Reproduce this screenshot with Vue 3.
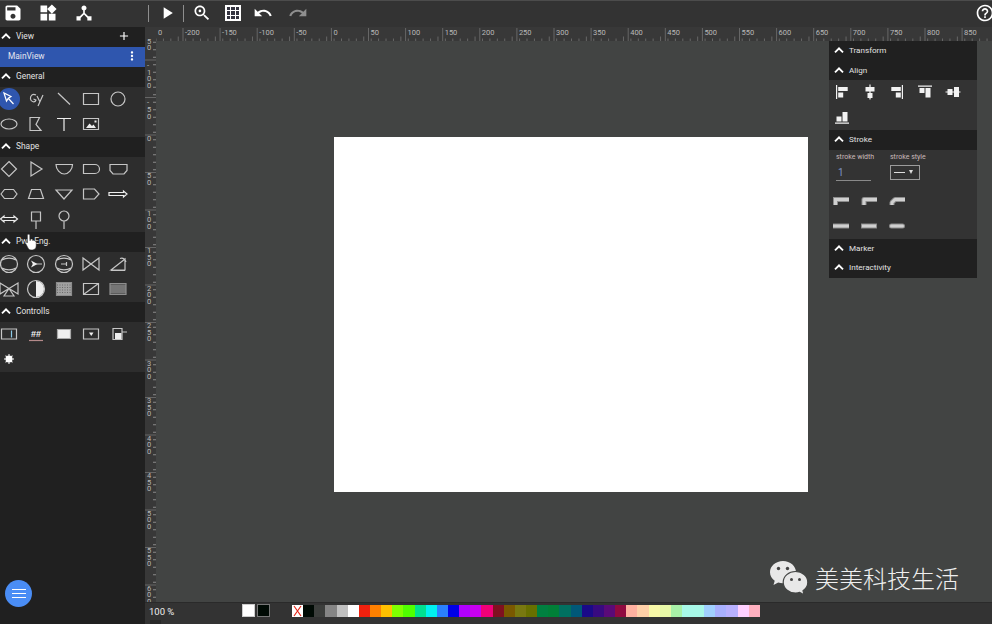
<template>
  <div class="app">
    <header class="toolbar">
      <svg v-for="b in toolButtons" :key="b.name" class="tool" :style="{ left: b.x + 'px', opacity: b.dim ? 0.45 : 1 }" viewBox="0 0 24 24">
        <path :d="b.d" fill="#fff" />
        <circle v-if="b.name === 'zoom'" cx="9.5" cy="9.5" r="1.6" fill="#fff" />
      </svg>
      <span class="sep" style="left: 148px"></span>
      <span class="sep" style="left: 183px"></span>
      <div class="grid-btn">
        <i v-for="n in 9" :key="n"></i>
      </div>
    </header>

    <div class="body">
      <aside class="sidebar">
        <div class="head">
          <svg class="chev" viewBox="0 0 24 24"><path :d="chevron" /></svg>
          <span>View</span>
          <svg class="plus" viewBox="0 0 24 24"><path d="M19 13h-6v6h-2v-6H5v-2h6V5h2v6h6v2z" fill="#fff" /></svg>
        </div>
        <div class="view-row">
          <span>MainView</span>
          <svg class="more" viewBox="0 0 24 24"><path d="M12 8c1.1 0 2-.9 2-2s-.9-2-2-2-2 .9-2 2 .9 2 2 2zm0 2c-1.1 0-2 .9-2 2s.9 2 2 2 2-.9 2-2-.9-2-2-2zm0 6c-1.1 0-2 .9-2 2s.9 2 2 2 2-.9 2-2-.9-2-2-2z" fill="#fff" /></svg>
        </div>

        <section v-for="s in palettes" :key="s.title">
          <div class="head">
            <svg class="chev" viewBox="0 0 24 24"><path :d="chevron" /></svg>
            <span>{{ s.title }}</span>
          </div>
          <div class="icons">
            <div v-for="(ic, i) in s.icons" :key="i" class="icon" :class="{ active: ic.active }">
              <svg viewBox="0 0 20 20" width="20" height="20">
                <path v-if="ic.f" :d="ic.f" :fill="ic.fc || '#eee'" />
                <path v-if="ic.d" :d="ic.d" fill="none" :stroke="ic.c || '#c6c6c6'" stroke-width="1.2" />
                <path v-if="ic.d2" :d="ic.d2" fill="none" :stroke="ic.c2" stroke-width="1.2" :stroke-dasharray="ic.dash" />
                <text v-if="ic.t" x="10" y="12.5" text-anchor="middle" class="hash">{{ ic.t }}</text>
              </svg>
            </div>
          </div>
        </section>

        <div class="fab">
          <i></i><i></i><i></i>
        </div>
        <svg class="hand" viewBox="0 0 12 18">
          <path d="M3.6 1.2c.7 0 1.2.5 1.2 1.2v5l.9-.2V6.400c0-.6 1.700-.6 1.900 0v1l.8-.1c.5-.2 1.300.1 1.400.6l.2.4c.5-.1 1.200.2 1.200.9v3.500c0 2.300-1.400 4.200-3.800 4.200H6c-1.600 0-2.300-.9-3-2L.7 10.600c-.5-.9.6-1.900 1.500-1.100l.2.3V2.400c0-.7.5-1.200 1.200-1.200z" fill="#fff" stroke="#222" stroke-width=".5" />
        </svg>
      </aside>

      <main class="main">
        <div class="ruler-top">
          <div class="corner"></div>
          <svg width="836" height="14">
            <text x="2" y="7.500" class="rt">0</text>
            <line v-for="(x, i) in minorX" :key="'m' + i" :x1="x" :x2="x" :y1="i % 5 === 3 ? 9.500 : 11.500" y2="14" class="tick" />
            <g v-for="(v, i) in labelsX" :key="v">
              <line :x1="27 + i * 37.1" :x2="27 + i * 37.1" y1="1" y2="14" class="tick" />
              <text :x="29 + i * 37.1" y="7.500" class="rt">{{ v }}</text>
            </g>
          </svg>
        </div>

        <div class="work">
          <svg class="ruler-left" width="11" height="561">
            <line v-for="y in minorY" :key="'n' + y" x1="8" x2="11" :y1="y" :y2="y" class="tick light" />
            <line v-for="y in majorY" :key="'j' + y" x1="0" x2="11" :y1="y" :y2="y" class="tick" />
            <text v-for="g in glyphsY" :key="g.id" x="2" :y="g.y" class="rt">{{ g.c }}</text>
          </svg>

          <div class="canvas">
            <div class="artboard"></div>

            <div class="panel">
              <div class="head"><svg class="chev" viewBox="0 0 24 24"><path :d="chevron" /></svg><span>Transform</span></div>
              <div class="head"><svg class="chev" viewBox="0 0 24 24"><path :d="chevron" /></svg><span>Align</span></div>
              <div class="icons align">
                <div v-for="(d, i) in alignIcons" :key="i" class="icon">
                  <svg viewBox="0 0 20 20" width="20" height="20"><path :d="d" fill="#f2f2f2" /></svg>
                </div>
              </div>
              <div class="head"><svg class="chev" viewBox="0 0 24 24"><path :d="chevron" /></svg><span>Stroke</span></div>
              <div class="stroke">
                <div class="fields">
                  <div class="field width">
                    <label>stroke width</label>
                    <div class="value">1</div>
                  </div>
                  <div class="field">
                    <label>stroke style</label>
                    <div class="select"><span class="dash"></span><span class="arrow"></span></div>
                  </div>
                </div>
                <div class="caps">
                  <svg v-for="(c, i) in caps" :key="i" viewBox="0 0 18 12" width="18" height="12">
                    <path :d="c.d" fill="none" stroke="#8d8d8d" stroke-width="5" :stroke-linecap="c.cap" :stroke-linejoin="c.join" />
                    <path :d="c.d" fill="none" stroke="#d0d0d0" stroke-width="3" :stroke-linecap="c.cap" :stroke-linejoin="c.join" />
                  </svg>
                </div>
              </div>
              <div class="head"><svg class="chev" viewBox="0 0 24 24"><path :d="chevron" /></svg><span>Marker</span></div>
              <div class="head"><svg class="chev" viewBox="0 0 24 24"><path :d="chevron" /></svg><span>Interactivity</span></div>
            </div>

            <div class="watermark">
              <svg width="42" height="38" viewBox="0 0 42 38">
                <path d="M15 2C7.800 2 2 7 2 13.200c0 3.500 1.800 6.500 4.700 8.600L5.500 26l4.700-2.500c1.500.5 3 .7 4.800.7 7.200 0 13-5 13-11S22.200 2 15 2z" fill="#e8e8e8" />
                <circle cx="10.500" cy="9.500" r="1.700" fill="#444" />
                <circle cx="19.500" cy="9.500" r="1.700" fill="#444" />
                <path d="M27.500 12.500c-6.800 0-12.300 4.800-12.300 10.800s5.500 10.800 12.300 10.800c1.500 0 2.900-.2 4.200-.7l4.300 2.300-1-3.900c2.900-2 4.800-5 4.800-8.500 0-6-5.500-10.800-12.300-10.800z" fill="#e8e8e8" stroke="#424443" stroke-width="1.200" />
                <circle cx="23.500" cy="20.500" r="1.500" fill="#444" />
                <circle cx="31.500" cy="20.500" r="1.500" fill="#444" />
              </svg>
              <span>美美科技生活</span>
            </div>
          </div>
        </div>

        <footer class="status">
          <span class="zoom">100 %</span>
          <span class="swatch fill"></span>
          <span class="swatch line"></span>
          <div class="colors">
            <span class="none">
              <svg viewBox="0 0 11 12" width="11" height="12"><path d="M2 1l7 10M9 1L2 11" stroke="#e8281a" stroke-width="1.200" /></svg>
            </span>
            <span v-for="c in colors" :key="c.id" :style="{ background: c.hex }"></span>
          </div>
          <span class="chip"></span>
        </footer>
      </main>
    </div>
  </div>
</template>

<script setup>
const chevron = 'M12 7l-8 8 2.200 2.200L12 11.400l5.800 5.800L20 15z'

const toolButtons = [
  { name: 'save', x: 3, d: 'M17 3H5c-1.110 0-2 .9-2 2v14c0 1.100.89 2 2 2h14c1.100 0 2-.9 2-2V7l-4-4zm-5 16c-1.660 0-3-1.340-3-3s1.340-3 3-3 3 1.340 3 3-1.340 3-3 3zm3-10H5V5h10v4z' },
  { name: 'widgets', x: 38, d: 'M13 13v8h8v-8h-8zM3 21h8v-8H3v8zM3 3v8h8V3H3zm13.660-1.310L11 7.340 16.660 13l5.660-5.660-5.660-5.650z' },
  { name: 'hub', x: 74, d: 'M17 16l-4-4V8.820C14.160 8.400 15 7.300 15 6c0-1.660-1.340-3-3-3S9 4.340 9 6c0 1.300.84 2.400 2 2.820V12l-4 4H3v5h5v-3.050l4-4.200 4 4.200V21h5v-5h-4z' },
  { name: 'play', x: 157, d: 'M8 5v14l11-7z' },
  { name: 'zoom', x: 192, d: 'M15.500 14h-.79l-.28-.27C15.410 12.590 16 11.110 16 9.500 16 5.910 13.090 3 9.500 3S3 5.910 3 9.500 5.910 16 9.500 16c1.610 0 3.090-.59 4.230-1.570l.27.28v.79l5 4.990L20.490 19l-4.990-5zm-6 0C7.010 14 5 11.990 5 9.500S7.010 5 9.500 5 14 7.010 14 9.500 11.990 14 9.500 14z' },
  { name: 'undo', x: 253, d: 'M12.500 8c-2.650 0-5.050.99-6.900 2.600L2 7v9h9l-3.620-3.620c1.390-1.160 3.160-1.880 5.120-1.880 3.540 0 6.550 2.310 7.600 5.500l2.370-.78C21.080 11.030 17.150 8 12.500 8z' },
  { name: 'redo', x: 288, dim: true, d: 'M18.400 10.600C16.550 8.990 14.150 8 11.500 8c-4.650 0-8.580 3.030-9.960 7.220L3.900 16c1.050-3.190 4.050-5.500 7.600-5.500 1.950 0 3.730.72 5.120 1.880L13 16h9V7l-3.600 3.600z' },
  { name: 'help', x: 975, d: 'M11 18h2v-2h-2v2zm1-16C6.480 2 2 6.480 2 12s4.480 10 10 10 10-4.480 10-10S17.520 2 12 2zm0 18c-4.410 0-8-3.590-8-8s3.590-8 8-8 8 3.590 8 8-3.590 8-8 8zm0-14c-2.210 0-4 1.790-4 4h2c0-1.100.9-2 2-2s2 .9 2 2c0 2-3 1.750-3 5h2c0-2.250 3-2.500 3-5 0-2.210-1.790-4-4-4z' }
]

const circ = 'M18.500 10a8.500 8.500 0 1 1-17 0 8.500 8.500 0 1 1 17 0z'
const arcs = 'M3 6C7 3.500 13 3.500 17 6M3 14C7 16.500 13 16.500 17 14'

const palettes = [
  {
    title: 'General',
    icons: [
      { active: true, d: 'M5 4l2.500 8 1.800-2.700L12 7.500zM9 9l5.500 6', c: '#fff' },
      { d: 'M10 6C6.500 4 4 7 4.500 10c.5 3 4.500 4 5.500 1L7.500 10M11 7l3 6M17 6l-5 11' },
      { d: 'M4 4l12 11.500' },
      { d: 'M2.500 4.500h15v11h-15z' },
      { d: 'M17 10a7 7 0 1 1-14 0 7 7 0 1 1 14 0z' },
      { d: 'M18 10a8 5 0 1 1-16 0 8 5 0 1 1 16 0z' },
      { d: 'M4 16.500V3.500h9.500L10 10.500l5 6z' },
      { d: 'M3 4.500h14M10 4.500V17', c: '#eee' },
      { d: 'M2.500 4.500h15v11h-15z', f: 'M5 14l3.500-4.500 2.500 2.500 1.500-1.500 2.500 3.500zM13.500 6.500h2v2h-2z' }
    ]
  },
  {
    title: 'Shape',
    icons: [
      { d: 'M10 2.500l7.500 7.500-7.500 7.500L2.500 10z' },
      { d: 'M5 3l11 7-11 7z' },
      { d: 'M2 5.500h16.500c0 5-4 9.500-8.200 9.500S2 10.500 2 5.500z' },
      { d: 'M2.500 5.500h11.500a4.500 4.500 0 0 1 0 9H2.500z' },
      { d: 'M2 5.500h17v6l-3 3.500H5l-3-3.500z' },
      { d: 'M2 10l3.500-4.500h9L18 10l-3.500 4.500h-9z' },
      { d: 'M5.500 5.500h9l3 9h-15z' },
      { d: 'M2 6h16l-8 9z' },
      { d: 'M2.500 5h11l4.500 5-4.500 5h-11z' },
      { d: 'M1 8.500h14.500V7l3.500 3-3.500 3v-1.500H1z', c: '#eee' },
      { d: 'M1.500 10l3.500-3v1.500h10V7l3.500 3-3.500 3v-1.500H5V13z', c: '#eee' },
      { d: 'M5.500 3h9v9h-9zM10 12v8' },
      { d: 'M15 7a5 5 0 1 1-10 0 5 5 0 1 1 10 0zM10 12v8' }
    ]
  },
  {
    title: 'Pwr. Eng.',
    icons: [
      { d: circ + arcs },
      { d: circ + 'M10 10H16', f: 'M5 6.500l6.500 3.500-6.500 3.500 1.800-3.500z' },
      { d: circ + arcs + 'M7 10h6M12.500 8v4' },
      { d: 'M2 4v12L18 4v12z' },
      { d: 'M3 16L17 5v11zM3 16.500h14M12 4.500c3-1 5 1 6 3.500' },
      { d: 'M1 4l18 11V4L1 15zM10 9.500l-5 7.500h10z' },
      { d: circ, f: 'M10 2c4.500 0 8 3.500 8 8s-3.500 8-8 8z' },
      { d: 'M2.500 3.500h15v13h-15z', c: '#8c8c8c', f: 'M2.500 3.500h15v13h-15z', fc: '#a2a2a2', d2: 'M3 6h14M3 8.500h14M3 11h14M3 13.500h14', c2: '#6a6a6a', dash: '1 1.500' },
      { d: 'M2.500 4.500h15v11h-15zM2.500 15.500l15-11' },
      { d: 'M2 4.500h16v11H2zM2 7h16M2 9h16M2 11h16M2 13h16', c: '#8e8e8e', f: 'M2 4.500h16v11H2z', fc: '#5c5c5c' }
    ]
  },
  {
    title: 'Controlls',
    icons: [
      { d: 'M2.500 5h15v10h-15z', d2: 'M12.500 6.500v7', c2: '#8ccbe8' },
      { t: '##', d: 'M3 16.500h14', c: '#b58a8a' },
      { d: 'M3.500 5.500h13v9h-13z', c: '#a8a8a8', f: 'M3.500 5.500h13v9h-13z', fc: '#efefef' },
      { d: 'M2.500 5h15v10h-15z', f: 'M8 8.500h4.500l-2.250 3.500z' },
      { d: 'M5 4.500h9v11H5zM14 8h5', f: 'M7 9h6.500v6.500H7z' },
      { f: 'M10 6.500a3.500 3.500 0 1 1 0 7 3.500 3.500 0 0 1 0-7zM9.500 5h1v1.500h-1zM9.500 13.500h1V15h-1zM5 9.500h1.500v1H5zM13.500 9.500H15v1h-1.500zM6.200 7l.7-.7 1 1-.7.7zM12.100 12.800l.7-.7 1 1-.7.7zM6.200 13l1-1 .7.7-1 1zM12.100 7.200l1-1 .7.7-1 1z', fc: '#fff' }
    ]
  }
]

const alignIcons = [
  'M4 3h1.200v14H4zM6.200 5h9.500v4H6.200zM6.200 10.500h5v5h-5z',
  'M9.400 2.500h1.200v15H9.400zM5.500 5h9v4.500h-9zM7.500 11h5v5h-5z',
  'M14.800 3H16v14h-1.200zM4.300 5h9.500v4H4.300zM8.800 10.500h5v5h-5z',
  'M3 3.500h14v1.200H3zM4.500 6h5v5h-5zM10.500 6h5v9.500h-5z',
  'M2.500 9.400h15v1.200h-15zM4.500 7h5v6h-5zM11 5h5v10h-5z',
  'M3 15.500h14v1.200H3zM4.500 9.500h5v5h-5zM10.500 5h5v9.500h-5z'
]

const caps = [
  { d: 'M16 4.500H2.500V10', cap: 'butt', join: 'miter' },
  { d: 'M16 4.500H3V10', cap: 'butt', join: 'round' },
  { d: 'M16 4.500H6L3 7.500V10', cap: 'butt', join: 'bevel' },
  { d: 'M0 6h16', cap: 'butt', join: 'miter' },
  { d: 'M2.500 6h11', cap: 'square', join: 'miter' },
  { d: 'M2.500 6h11', cap: 'round', join: 'miter' }
]

const labelsX = []
for (let v = -200; v <= 850; v += 50) labelsX.push(v)
const minorX = []
for (let x = 0; x < 836; x += 7.42) minorX.push(x)

// left ruler digits are stacked, one under the other, and the first label runs under the top ruler
const majorY = []
const glyphsY = []
for (let i = 0, v = -150; v <= 600; v += 50, i++) {
  const major = -18.5 + i * 37.5
  if (major > 0) majorY.push(major)
  let y = major + 3
  for (const c of String(v)) {
    const center = c === '-' ? y + 2 : y
    if (center >= -3) glyphsY.push({ id: v + '-' + y, c, y: center + 2.5 })
    y += c === '-' ? 9 : 6.7
  }
}
const minorY = []
for (let y = 1.25; y < 561; y += 7.5) minorY.push(y)

const colors = [
  '#000a04', '#3c3e3c', '#858585', '#c0c0c0', '#ffffff', '#f0210e', '#ff8000', '#ffc000', '#80ff00', '#50ff00',
  '#00e090', '#00f0f0', '#2a80ff', '#0000e8', '#b000ff', '#c800f0', '#f00078', '#801020', '#7a5800', '#787810',
  '#687000', '#008040', '#008038', '#007060', '#005878', '#1a0a88', '#380a80', '#5a0a78', '#900a40', '#ffb0a0',
  '#ffd0a8', '#f8f8a8', '#e8f8a8', '#a8f0a8', '#a8f8e8', '#a8f8e8', '#a0d0ff', '#a8b0ff', '#b8b0ff', '#ffd0ff', '#ffb0c0'
].map((hex, id) => ({ hex, id }))
</script>

<style>
html,
body {
  margin: 0;
  background: #333;
}
</style>

<style scoped>
.app {
  width: 992px;
  height: 624px;
  display: flex;
  flex-direction: column;
  overflow: hidden;
  font-family: Roboto, "Liberation Sans", sans-serif;
  color: #ddd;
  background: #333;
}

.toolbar {
  position: relative;
  height: 27px;
  flex: none;
  background: #333;
  border-top: 1px solid #4c4c4c;
  box-sizing: border-box;
}

.tool {
  position: absolute;
  top: 2px;
  width: 20px;
  height: 20px;
}

.sep {
  position: absolute;
  top: 4px;
  width: 1px;
  height: 17px;
  background: #8e8e8e;
}

.grid-btn {
  position: absolute;
  left: 225px;
  top: 4px;
  width: 16px;
  height: 16px;
  box-sizing: border-box;
  border: 2px solid #fff;
  display: grid;
  grid-template-columns: repeat(3, 1fr);
  grid-template-rows: repeat(3, 1fr);
  gap: 1px;
  background: #fff;
}

.grid-btn i {
  background: #343440;
}

.body {
  flex: 1;
  display: flex;
  min-height: 0;
}

.sidebar {
  position: relative;
  width: 145px;
  flex: none;
  background: #202020;
}

.head {
  height: 20px;
  padding-bottom: 2px;
  box-sizing: border-box;
  display: flex;
  align-items: center;
  background: #202020;
  font-size: 8.400px;
  color: #e2e2e2;
}

.chev {
  width: 14px;
  height: 14px;
  margin: 0 3px 0 -1px;
  flex: none;
}

.chev path {
  fill: #fff;
}

.head .plus {
  width: 14px;
  height: 14px;
  margin-left: auto;
  margin-right: 14px;
}

.view-row {
  height: 20px;
  padding: 0 6px 2px 8px;
  box-sizing: border-box;
  display: flex;
  align-items: center;
  justify-content: space-between;
  background: #2f56ae;
  font-size: 8.400px;
  color: #e6e6ee;
}

.more {
  width: 14px;
  height: 14px;
}

.icons {
  display: grid;
  grid-template-columns: repeat(5, 20px);
  grid-auto-rows: 25px;
  column-gap: 7.300px;
  background: #2d2d2d;
}

.sidebar .icons {
  margin-left: -1px;
}

.icon {
  position: relative;
  padding-top: 2px;
  box-sizing: border-box;
}

.icon svg {
  position: relative;
  display: block;
}

.icon.active::before {
  content: "";
  position: absolute;
  left: -1px;
  top: 1px;
  width: 22px;
  height: 22px;
  border-radius: 50%;
  background: #2f56ae;
}

.hash {
  font-family: "Liberation Sans", sans-serif;
  font-size: 9px;
  font-weight: 700;
  fill: #f2f2f2;
}

.fab {
  position: absolute;
  left: 5px;
  bottom: 17px;
  width: 27px;
  height: 27px;
  border-radius: 50%;
  background: #4a8df5;
  display: flex;
  flex-direction: column;
  align-items: center;
  justify-content: center;
  gap: 2.500px;
}

.fab i {
  width: 14px;
  height: 1.500px;
  background: #fff;
}

.hand {
  position: absolute;
  left: 25px;
  top: 206px;
  width: 12px;
  height: 18px;
}

.main {
  flex: 1;
  min-width: 0;
  display: flex;
  flex-direction: column;
}

.ruler-top {
  height: 14px;
  flex: none;
  display: flex;
  background: #383838;
}

.corner {
  width: 11px;
  flex: none;
}

.rt {
  font-size: 7.500px;
  fill: #b8b8b8;
}

.tick {
  stroke: #666;
  stroke-width: 1;
}

.tick.light {
  stroke: #888;
}

.work {
  flex: 1;
  min-height: 0;
  display: flex;
}

.ruler-left {
  flex: none;
  background: #383838;
  overflow: visible;
}

.canvas {
  position: relative;
  flex: 1;
  min-width: 0;
  background: #424443;
  padding: 96px 0 0 178px;
  box-sizing: border-box;
  overflow: hidden;
}

.artboard {
  width: 474px;
  height: 355px;
  background: #fff;
}

.panel {
  position: absolute;
  right: 15px;
  top: 0;
  width: 148px;
  background: #333;
}

.panel .head {
  height: 19.500px;
  background: #202020;
  padding: 0 0 1px 3px;
  font-size: 8.100px;
}

.panel .chev {
  margin: 0 3px 0 0;
}

.align {
  column-gap: 7.700px;
  padding-left: 3px;
  background: #333;
}

.stroke {
  height: 89px;
  padding: 3px 7px 0;
  box-sizing: border-box;
  background: #333;
}

.fields {
  display: flex;
  gap: 19px;
}

.field label {
  display: block;
  font-size: 7px;
  color: #c9b9b9;
  line-height: 9px;
  white-space: nowrap;
}

.field.width {
  width: 35px;
}

.value {
  margin-top: 3px;
  height: 16px;
  padding-left: 2px;
  font-size: 10px;
  line-height: 15px;
  color: #7d94c4;
  border-bottom: 1px solid #8a8a8a;
  box-sizing: border-box;
}

.select {
  margin-top: 3px;
  width: 30px;
  height: 15px;
  box-sizing: border-box;
  border: 1px solid #9c9c9c;
  display: flex;
  align-items: center;
  padding-left: 3px;
  gap: 4px;
}

.dash {
  width: 11px;
  height: 1px;
  background: #ddd;
}

.arrow {
  width: 0;
  height: 0;
  border: 2.500px solid transparent;
  border-top: 4px solid #ddd;
  border-bottom: 0;
}

.caps {
  display: grid;
  grid-template-columns: repeat(3, 18px);
  grid-auto-rows: 25px;
  column-gap: 10px;
  margin: 8px 0 0 -3px;
  align-items: center;
}

.watermark {
  position: absolute;
  left: 612px;
  top: 518px;
  display: flex;
  align-items: center;
  gap: 5px;
  font-family: "Noto Sans CJK SC", sans-serif;
  font-size: 24px;
  font-weight: 300;
  line-height: 38px;
  color: #efefef;
  white-space: nowrap;
}

.status {
  position: relative;
  height: 22px;
  flex: none;
  display: flex;
  align-items: flex-start;
  background: #333;
  border-top: 1px solid #2a2a2a;
  box-sizing: border-box;
}

.zoom {
  margin: 3px 0 0 4px;
  width: 93px;
  font-size: 9.500px;
  line-height: 11px;
  color: #eee;
}

.swatch {
  width: 13px;
  height: 13px;
  margin-top: 1px;
  box-sizing: border-box;
}

.swatch.fill {
  background: #fff;
  border: 1px solid #ccc;
}

.swatch.line {
  margin-left: 2px;
  background: #000a04;
  border: 1px solid #777;
}

.colors {
  margin: 2px 0 0 22px;
  display: flex;
  width: 468px;
  height: 12px;
}

.colors span {
  flex: 1;
}

.colors .none {
  background: #fff;
}

.colors .none svg {
  display: block;
}

.chip {
  position: absolute;
  left: 5px;
  bottom: 0;
  width: 11px;
  height: 4px;
  background: #282828;
}
</style>
